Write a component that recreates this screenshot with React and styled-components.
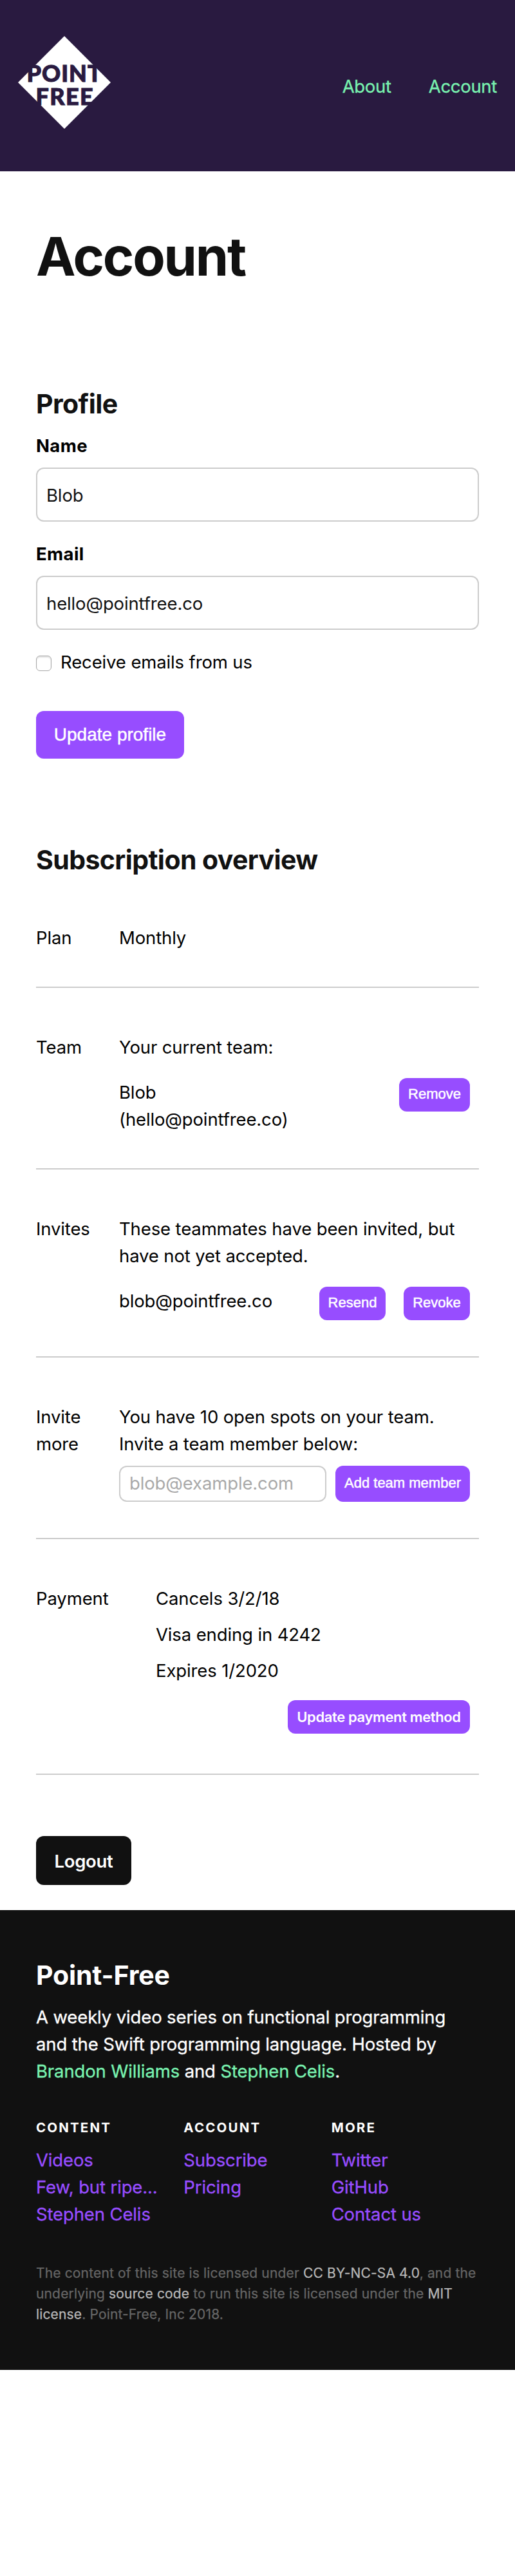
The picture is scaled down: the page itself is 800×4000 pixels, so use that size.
import React from "react";
import styled, { createGlobalStyle } from "styled-components";

const Global = createGlobalStyle`
  *, *::before, *::after { box-sizing: border-box; }
  body {
    margin: 0;
    background: #fff;
    color: #000;
    font-family: Inter, "Liberation Sans", sans-serif;
    font-size: 27.5px;
    line-height: 42px;
    letter-spacing: -0.13px;
  }
`;

const Header = styled.header`
  height: 266px;
  padding: 0 28px;
  display: flex;
  align-items: center;
  justify-content: space-between;
  background: #291a40;
`;

const Logo = styled.svg`
  display: block;
  width: 144px;
  height: 144px;
  margin-top: -10px;
`;

const LogoText = styled.text`
  font-family: Lato, sans-serif;
  font-weight: 900;
  font-size: 36px;
  fill: #291a40;
  stroke: #291a40;
  stroke-width: 1px;
`;

const Nav = styled.nav`
  display: flex;
  gap: 58px;
  padding-top: 2px;
  color: #79f2b0;
  letter-spacing: -0.3px;
  -webkit-text-stroke: 0.35px currentColor;
`;

const NavLink = styled.a`
  color: inherit;
`;

const Main = styled.main`
  padding: 82px 56px 0;
  height: 2700px;
`;

const Title = styled.h1`
  margin: 0;
  font-size: 82.5px;
  line-height: 100px;
  font-weight: 700;
  letter-spacing: -2.2px;
  color: #111;
`;

const Heading = styled.h2`
  margin: ${(p) => p.$top || 0}px 0 ${(p) => p.$bottom || 0}px;
  font-size: 41px;
  line-height: 50px;
  font-weight: 700;
  letter-spacing: ${(p) => (p.$light ? -0.16 : -0.6)}px;
  color: ${(p) => (p.$light ? "#fff" : "#111")};
`;

const Field = styled.label`
  display: block;
  margin-bottom: 29px;
`;

const FieldLabel = styled.span`
  display: block;
  margin-bottom: 13px;
  font-weight: 700;
  letter-spacing: 0.4px;
`;

const Input = styled.input`
  display: block;
  width: ${(p) => (p.$small ? "322px" : "100%")};
  height: ${(p) => (p.$small ? 56 : 84)}px;
  padding: ${(p) => (p.$small ? "0 14px 2px" : "2px 14px 0")};
  border: 2px solid #ccc;
  border-radius: 12px;
  background: #fff;
  color: #111;
  font: inherit;
  letter-spacing: inherit;
  &::placeholder { color: #a9a9a9; opacity: 1; }
`;

const CheckRow = styled.label`
  display: flex;
  align-items: center;
  gap: 14px;
`;

const Checkbox = styled.input`
  appearance: none;
  width: 24px;
  height: 24px;
  margin: 4px 0 0;
  border: 1px solid #a8a8a8;
  border-radius: 6px;
  box-shadow: inset 0 2px 2px rgba(0, 0, 0, 0.12);
`;

const Button = styled.button`
  display: flex;
  align-items: center;
  justify-content: center;
  flex: none;
  width: ${(p) => p.$w}px;
  height: ${(p) => p.$h || 52}px;
  margin: ${(p) => p.$m || 0};
  padding: 0;
  border: 0;
  border-radius: 12px;
  background: #974dff;
  color: #fff;
  white-space: nowrap;
`;

const SmallButton = styled(Button)`
  padding-bottom: 3px;
  font: 400 22px "Liberation Sans", Arial, sans-serif;
  -webkit-text-stroke: 0.5px #fff;
`;

const LargeButton = styled(Button)`
  font: 400 28px "Liberation Sans", Arial, sans-serif;
  -webkit-text-stroke: 0.5px #fff;
`;

const PaymentButton = styled(Button)`
  font: 600 22px Inter, sans-serif;
  letter-spacing: -0.38px;
`;

const LogoutButton = styled(Button)`
  padding-top: 2px;
  background: #111;
  font: 600 27.5px Inter, sans-serif;
  letter-spacing: -0.3px;
`;

const Row = styled.section`
  display: flex;
  height: ${(p) => p.$h}px;
  padding-top: ${(p) => p.$top || 71}px;
  border-bottom: 2px solid #ccc;
`;

const RowLabel = styled.div`
  width: ${(p) => (p.$wide ? 186 : 129)}px;
  flex: none;
`;

const RowBody = styled.div`
  flex: 1;
  padding-right: 14px;
`;

const Line = styled.p`
  margin: 0 0 ${(p) => p.$gap || 0}px;
  white-space: nowrap;
`;

const Person = styled.div`
  display: flex;
  align-items: flex-start;
  margin-top: 27px;
`;

const PersonName = styled.div`
  flex: 1;
  padding-top: 1px;
`;

const InviteForm = styled.div`
  display: flex;
  justify-content: space-between;
  margin-top: 13px;
`;

const Footer = styled.footer`
  height: 714px;
  padding: 76px 56px 0;
  background: #111;
  color: #fff;
`;

const Blurb = styled.div`
  -webkit-text-stroke: 0.35px currentColor;
`;

const Accent = styled.a`
  color: #79f2b0;
`;

const Columns = styled.div`
  display: grid;
  grid-template-columns: repeat(3, 1fr);
  margin-top: 51px;
`;

const ColumnTitle = styled.h5`
  margin: 0 0 13px;
  font-size: 20.5px;
  line-height: 32px;
  font-weight: 700;
  letter-spacing: 2.15px;
`;

const FootLink = styled.a`
  display: block;
  color: #974dff;
  white-space: nowrap;
  -webkit-text-stroke: 0.35px currentColor;
`;

const Legal = styled.div`
  margin-top: 55px;
  font-size: 21px;
  line-height: 32px;
  letter-spacing: 0.15px;
  color: #666;
  -webkit-text-stroke: 0.25px currentColor;
`;

const LegalLink = styled.a`
  color: #b8b8b8;
`;

export default function App() {
  return (
    <>
      <Global />
      <Header>
        <Logo viewBox="0 0 144 144">
          <polygon points="72,0 144,72 72,144 0,72" fill="#fff" />
          <LogoText x="13.5" y="70.5" textLength="116">POINT</LogoText>
          <LogoText x="27.5" y="107.2" textLength="89">FREE</LogoText>
        </Logo>
        <Nav>
          <NavLink>About</NavLink>
          <NavLink>Account</NavLink>
        </Nav>
      </Header>
      <Main>
        <Title>Account</Title>
        <Heading $top={154} $bottom={19}>Profile</Heading>
        <Field>
          <FieldLabel>Name</FieldLabel>
          <Input defaultValue="Blob" />
        </Field>
        <Field>
          <FieldLabel>Email</FieldLabel>
          <Input defaultValue="hello@pointfree.co" />
        </Field>
        <CheckRow>
          <Checkbox type="checkbox" />
          Receive emails from us
        </CheckRow>
        <LargeButton $w={230} $h={74} $m="55px 0 0">Update profile</LargeButton>
        <Heading $top={132}>Subscription overview</Heading>
        <Row $h={174} $top={75}>
          <RowLabel>Plan</RowLabel>
          <RowBody><Line>Monthly</Line></RowBody>
        </Row>
        <Row $h={282}>
          <RowLabel>Team</RowLabel>
          <RowBody>
            <Line>Your current team:</Line>
            <Person>
              <PersonName>
                <Line>Blob</Line>
                <Line>(hello@pointfree.co)</Line>
              </PersonName>
              <SmallButton $w={110}>Remove</SmallButton>
            </Person>
          </RowBody>
        </Row>
        <Row $h={292}>
          <RowLabel>Invites</RowLabel>
          <RowBody>
            <Line>These teammates have been invited, but</Line>
            <Line>have not yet accepted.</Line>
            <Person>
              <PersonName><Line>blob@pointfree.co</Line></PersonName>
              <SmallButton $w={103} $m="0 28px 0 0">Resend</SmallButton>
              <SmallButton $w={103}>Revoke</SmallButton>
            </Person>
          </RowBody>
        </Row>
        <Row $h={282}>
          <RowLabel>Invite<br />more</RowLabel>
          <RowBody>
            <Line>You have 10 open spots on your team.</Line>
            <Line>Invite a team member below:</Line>
            <InviteForm>
              <Input $small placeholder="blob@example.com" />
              <SmallButton $w={209} $h={56}>Add team member</SmallButton>
            </InviteForm>
          </RowBody>
        </Row>
        <Row $h={366}>
          <RowLabel $wide>Payment</RowLabel>
          <RowBody>
            <Line $gap={14}>Cancels 3/2/18</Line>
            <Line $gap={14}>Visa ending in 4242</Line>
            <Line>Expires 1/2020</Line>
            <PaymentButton $w={283} $m="25px 0 0 auto">Update payment method</PaymentButton>
          </RowBody>
        </Row>
        <LogoutButton $w={148} $h={76} $m="95px 0 0">Logout</LogoutButton>
      </Main>
      <Footer>
        <Heading $light $bottom={19}>Point-Free</Heading>
        <Blurb>
          <Line>A weekly video series on functional programming</Line>
          <Line>and the Swift programming language. Hosted by</Line>
          <Line><Accent>Brandon Williams</Accent> and <Accent>Stephen Celis</Accent>.</Line>
        </Blurb>
        <Columns>
          <div>
            <ColumnTitle>CONTENT</ColumnTitle>
            <FootLink>Videos</FootLink>
            <FootLink>Few, but ripe...</FootLink>
            <FootLink>Stephen Celis</FootLink>
          </div>
          <div>
            <ColumnTitle>ACCOUNT</ColumnTitle>
            <FootLink>Subscribe</FootLink>
            <FootLink>Pricing</FootLink>
          </div>
          <div>
            <ColumnTitle>MORE</ColumnTitle>
            <FootLink>Twitter</FootLink>
            <FootLink>GitHub</FootLink>
            <FootLink>Contact us</FootLink>
          </div>
        </Columns>
        <Legal>
          <Line>The content of this site is licensed under <LegalLink>CC BY-NC-SA 4.0</LegalLink>, and the</Line>
          <Line>underlying <LegalLink>source code</LegalLink> to run this site is licensed under the <LegalLink>MIT</LegalLink></Line>
          <Line><LegalLink>license</LegalLink>. Point-Free, Inc 2018.</Line>
        </Legal>
      </Footer>
    </>
  );
}
